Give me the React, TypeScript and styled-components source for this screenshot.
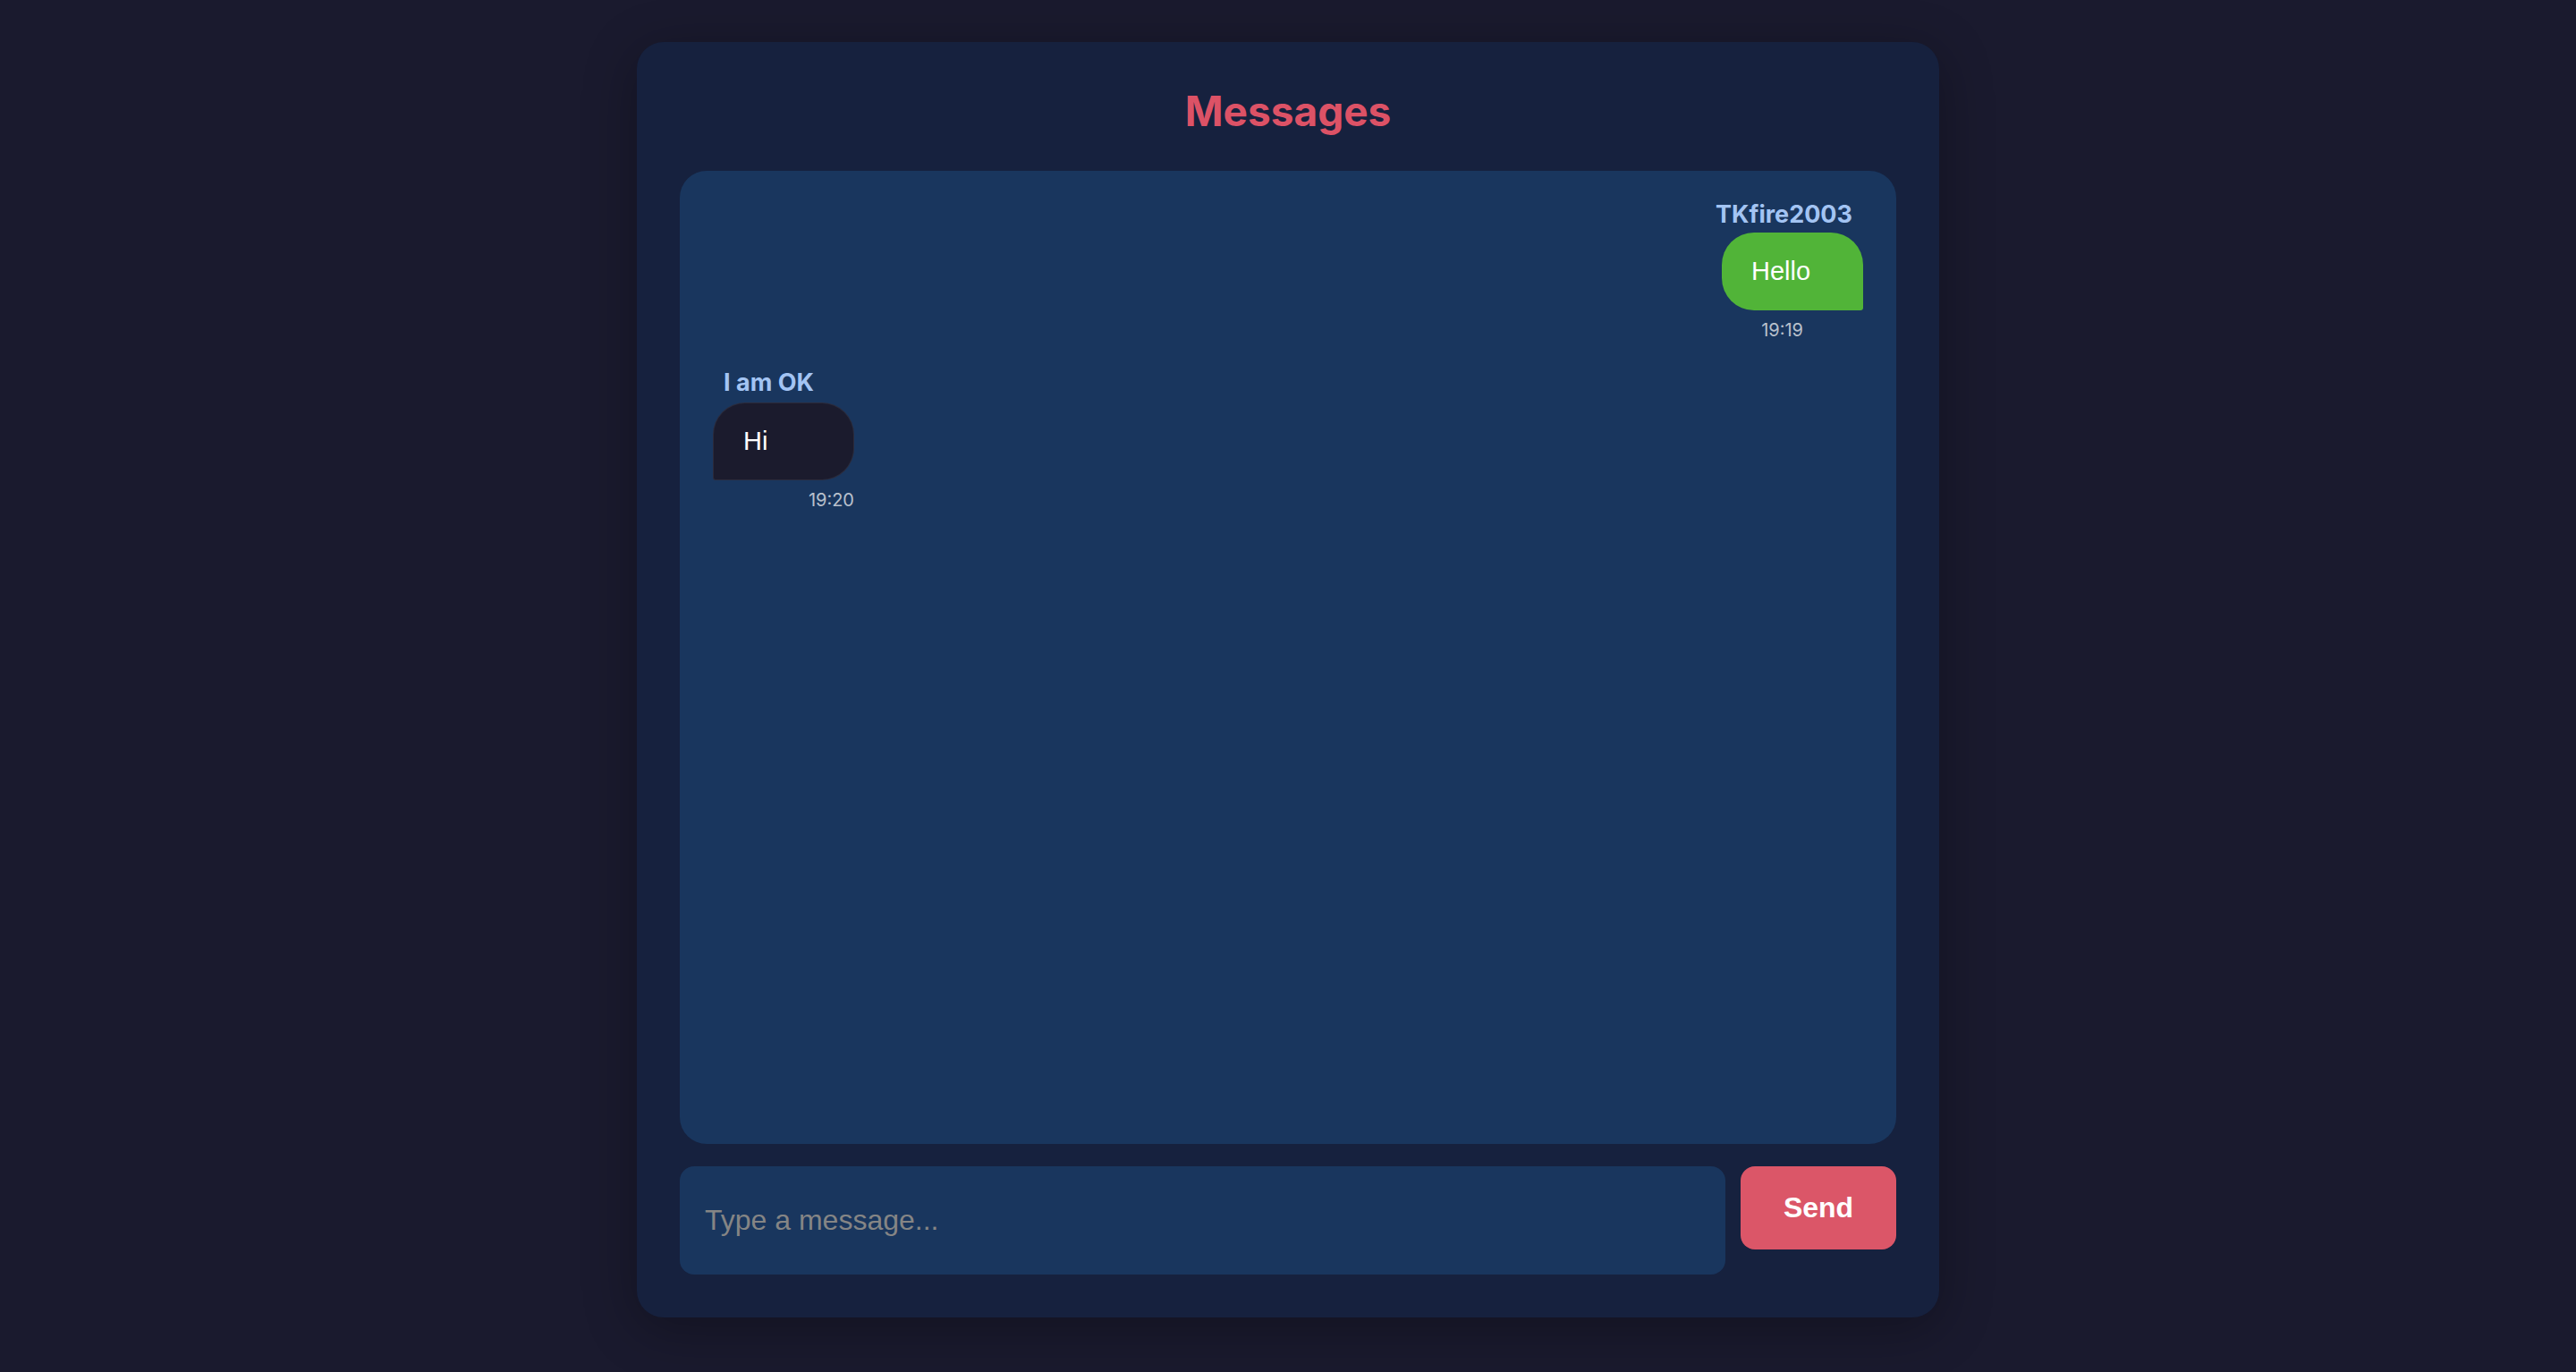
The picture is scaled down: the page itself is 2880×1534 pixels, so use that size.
import React from 'react';
import styled, { createGlobalStyle } from 'styled-components';

const GlobalStyle = createGlobalStyle`
  html, body {
    margin: 0;
    padding: 0;
    background-color: #1a1a2e;
  }
`;

const Page = styled.div`
  min-height: 1534px;
  display: flex;
  justify-content: center;
  align-items: flex-start;
  padding-top: 47px;
  box-sizing: border-box;
`;

const Card = styled.div`
  width: 1456px;
  box-sizing: border-box;
  padding: 48px;
  background-color: #16213e;
  border-radius: 30px;
  box-shadow: 0 12px 60px rgba(0, 0, 0, 0.3);
  display: flex;
  flex-direction: column;
`;

const Title = styled.h2`
  margin: 1px 0 39px;
  text-align: center;
  font-family: Inter, "Liberation Sans", sans-serif;
  font-weight: 700;
  font-size: 46px;
  color: #dc5266;
`;

const MessageList = styled.div`
  height: 1088px;
  box-sizing: border-box;
  padding: 32px 37px 31px;
  background-color: #19365e;
  border-radius: 30px;
  display: flex;
  flex-direction: column;
  gap: 30px;
  overflow-y: auto;
`;

const MessageGroup = styled.div<{ $own: boolean }>`
  display: flex;
  flex-direction: column;
  align-self: ${(p) => (p.$own ? 'flex-end' : 'flex-start')};
  align-items: ${(p) => (p.$own ? 'flex-end' : 'flex-start')};
`;

const Username = styled.div<{ $own: boolean }>`
  font-family: Inter, "Liberation Sans", sans-serif;
  font-weight: 700;
  font-size: 27px;
  color: #a3c4f3;
  margin: ${(p) => (p.$own ? '0 12px 4px 0' : '0 0 6px 12px')};
`;

const Bubble = styled.div<{ $own: boolean }>`
  min-width: 158px;
  height: 87px;
  box-sizing: border-box;
  padding: 0 33px;
  display: flex;
  align-items: center;
  font-family: "Liberation Sans", Arial, sans-serif;
  font-size: 29px;
  color: #ffffff;
  background-color: ${(p) => (p.$own ? '#51b438' : '#1b1b2d')};
  border: ${(p) => (p.$own ? 'none' : '1px solid rgba(255, 255, 255, 0.07)')};
  border-radius: ${(p) => (p.$own ? '36px 36px 3px 36px' : '36px 36px 36px 3px')};
`;

const Time = styled.div<{ $own: boolean }>`
  margin-top: 10px;
  font-family: Inter, "Liberation Sans", sans-serif;
  font-size: 20px;
  color: rgba(255, 255, 255, 0.7);
  align-self: flex-end;
  margin-right: ${(p) => (p.$own ? '67px' : '0')};
`;

const InputRow = styled.form`
  margin-top: 25px;
  display: flex;
  align-items: flex-start;
  gap: 17px;
`;

const MessageInput = styled.input`
  flex: 1;
  height: 121px;
  box-sizing: border-box;
  padding: 0 28px;
  border: none;
  outline: none;
  border-radius: 16px;
  background-color: #19365e;
  color: #ffffff;
  font-family: "Liberation Sans", Arial, sans-serif;
  font-size: 32px;

  &::placeholder {
    color: #858585;
  }
`;

const SendButton = styled.button`
  width: 174px;
  height: 93px;
  border: none;
  border-radius: 16px;
  background-color: #db5668;
  color: #ffffff;
  font-family: "Liberation Sans", Arial, sans-serif;
  font-weight: 700;
  font-size: 32px;
  cursor: pointer;
`;

const messages = [
  { id: 1, user: 'TKfire2003', text: 'Hello', time: '19:19', own: true },
  { id: 2, user: 'I am OK', text: 'Hi', time: '19:20', own: false },
];

const App: React.FC = () => {
  return (
    <>
      <GlobalStyle />
      <Page>
        <Card>
          <Title>Messages</Title>
          <MessageList>
            {messages.map((m) => (
              <MessageGroup key={m.id} $own={m.own}>
                <Username $own={m.own}>{m.user}</Username>
                <Bubble $own={m.own}>{m.text}</Bubble>
                <Time $own={m.own}>{m.time}</Time>
              </MessageGroup>
            ))}
          </MessageList>
          <InputRow onSubmit={(e) => e.preventDefault()}>
            <MessageInput type="text" placeholder="Type a message..." />
            <SendButton type="submit">Send</SendButton>
          </InputRow>
        </Card>
      </Page>
    </>
  );
};

export default App;
